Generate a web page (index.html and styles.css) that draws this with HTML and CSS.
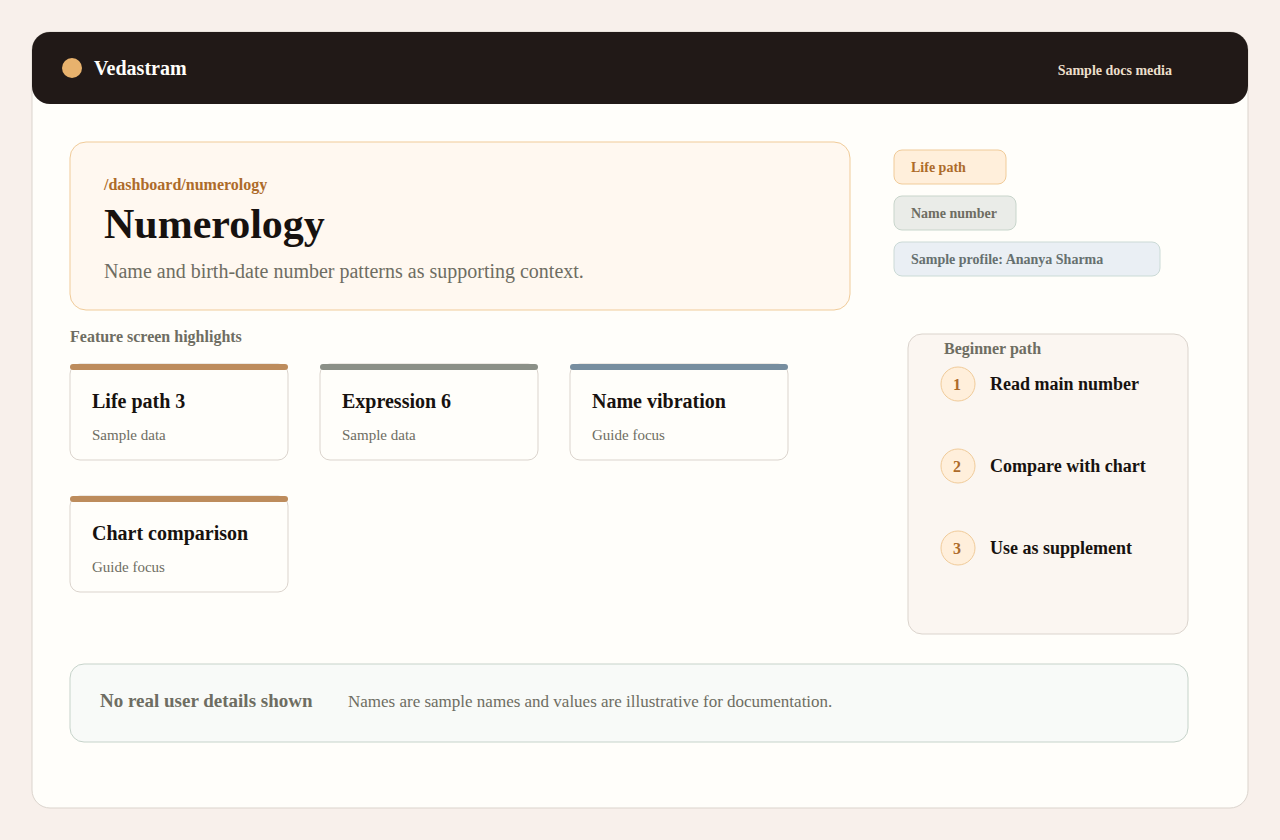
FILE: index.html
```html
<!DOCTYPE html>
<html lang="en">
<head>
  <meta charset="UTF-8">
  <meta name="viewport" content="width=device-width, initial-scale=1">
  <title>Vedastram - Numerology</title>
  <link rel="stylesheet" href="styles.css">
</head>
<body>

  <div class="shell outlined">
    <header class="topbar">
      <span class="logo-dot"></span>
      <span class="brand">Vedastram</span>
      <span class="topbar-note">Sample docs media</span>
    </header>

    <main>
      <div class="intro">
        <section class="hero outlined">
          <div class="route">/dashboard/numerology</div>
          <h1>Numerology</h1>
          <p>Name and birth-date number patterns as supporting context.</p>
        </section>
        <div class="pills">
          <span class="pill pill-gold outlined">Life path</span>
          <span class="pill pill-sage outlined">Name number</span>
          <span class="pill pill-blue outlined">Sample profile: Ananya Sharma</span>
        </div>
      </div>

      <div class="content">
        <section class="highlights">
          <h2>Feature screen highlights</h2>
          <div class="cards">
            <div class="card gold outlined">
              <h3>Life path 3</h3>
              <p>Sample data</p>
            </div>
            <div class="card sage outlined">
              <h3>Expression 6</h3>
              <p>Sample data</p>
            </div>
            <div class="card blue outlined">
              <h3>Name vibration</h3>
              <p>Guide focus</p>
            </div>
            <div class="card gold outlined">
              <h3>Chart comparison</h3>
              <p>Guide focus</p>
            </div>
          </div>
        </section>

        <aside class="path outlined">
          <h2>Beginner path</h2>
          <ol>
            <li><span class="step outlined">1</span>Read main number</li>
            <li><span class="step outlined">2</span>Compare with chart</li>
            <li><span class="step outlined">3</span>Use as supplement</li>
          </ol>
        </aside>
      </div>

      <div class="notice outlined">
        <strong>No real user details shown</strong>
        <span>Names are sample names and values are illustrative for documentation.</span>
      </div>
    </main>
  </div>

</body>
</html>
```

FILE: styles.css
```css
* {
  box-sizing: border-box;
}

body {
  margin: 0;
  padding: 31px;
  height: 840px;
  background: #f8f0eb;
  color: #17120f;
  font-family: "Liberation Serif", "Times New Roman", serif;
}

h1, h2, h3, p, ol {
  margin: 0;
  padding: 0;
}

/* soft hairline: 1px border drawn across two pixel rows */
.outlined {
  position: relative;
  isolation: isolate;
  --line: #dbd4cd;
  --fill: #fffefa;
  --radius: 10px;
}

.outlined::after {
  content: "";
  position: absolute;
  z-index: -1;
  inset: 0 1px 1px 0;
  background: var(--fill);
  border: 1px solid var(--line);
  border-radius: var(--radius);
  transform: translate(0.5px, 0.5px);
}

.shell {
  --radius: 18.5px;
  height: 778px;
  padding: 1px;
}

/* top bar */
.topbar {
  display: flex;
  align-items: center;
  height: 72px;
  padding: 0 76px 0 30px;
  background: #211917;
  border-radius: 18px;
  color: #fffefa;
}

.logo-dot {
  width: 20px;
  height: 20px;
  margin-right: 12px;
  border-radius: 50%;
  background: #e8b26d;
}

.brand {
  font-size: 20px;
  font-weight: bold;
  line-height: 24px;
}

.topbar-note {
  margin-left: auto;
  padding-top: 5px;
  font-size: 14px;
  font-weight: bold;
  line-height: 16px;
  color: #ecdfcb;
}

main {
  padding: 37px 59px 0 37px;
}

.intro {
  display: flex;
  gap: 42px;
}

.hero {
  --fill: #fff8f0;
  --line: #f0cb99;
  --radius: 16.5px;
  width: 782px;
  height: 170px;
  padding: 34px 35px 0;
}

.route {
  font-size: 16px;
  font-weight: bold;
  line-height: 20px;
  color: #ad6b2a;
}

.hero h1 {
  margin-top: 4px;
  font-size: 42px;
  line-height: 50px;
}

.hero p {
  margin-top: 10px;
  font-size: 20px;
  line-height: 24px;
  color: #6e6d62;
}

.pills {
  display: flex;
  flex-direction: column;
  gap: 10px;
  padding-top: 8px;
}

.pill {
  --radius: 8.5px;
  height: 36px;
  padding: 2px 0 0 18px;
  font-size: 14px;
  font-weight: bold;
  line-height: 33px;
}

.pill-gold {
  --fill: #ffefdb;
  --line: #f0cb99;
  width: 114px;
  color: #ad6b2a;
}

.pill-sage {
  --fill: #eaece8;
  --line: #c8d5cb;
  width: 124px;
  color: #6e6d62;
}

.pill-blue {
  --fill: #eaeff4;
  --line: #cbdad6;
  width: 268px;
  color: #66706f;
}

.content {
  display: flex;
  justify-content: space-between;
}

.highlights {
  width: 782px;
  padding-top: 16px;
}

h2 {
  font-size: 16px;
  line-height: 20px;
  color: #6e6d62;
}

.highlights h2 {
  padding-left: 1px;
}

.cards {
  display: grid;
  grid-template-columns: repeat(3, 220px);
  gap: 34px 30px;
  margin-top: 16px;
}

.card {
  --radius: 10.5px;
  height: 98px;
  padding: 26px 23px 0;
}

.card::before {
  content: "";
  position: absolute;
  top: 1px;
  left: 1px;
  right: 1px;
  height: 6px;
  border-radius: 3px;
}

.gold::before {
  background: #bd8c5c;
}

.sage::before {
  background: #8b9087;
}

.blue::before {
  background: #778e9f;
}

.card h3 {
  font-size: 20px;
  line-height: 24px;
}

.card p {
  margin-top: 13px;
  font-size: 15px;
  line-height: 18px;
  color: #6e6d62;
}

/* beginner steps */
.path {
  --fill: #fbf6f1;
  --radius: 14.5px;
  width: 282px;
  height: 302px;
  margin-top: 22px;
  padding: 6px 0 0 33px;
}

.path h2 {
  padding-left: 4px;
}

.path ol {
  display: flex;
  flex-direction: column;
  gap: 46px;
  margin-top: 7px;
  list-style: none;
}

.path li {
  display: flex;
  align-items: center;
  gap: 14px;
  height: 36px;
  font-size: 18px;
  font-weight: bold;
}

.step {
  --fill: #ffefdb;
  --line: #f0cb99;
  --radius: 50%;
  width: 36px;
  height: 36px;
  padding-right: 2px;
  color: #ad6b2a;
  font-size: 16px;
  line-height: 38px;
  text-align: center;
}

.notice {
  --fill: #f8faf8;
  --line: #c6d3ca;
  --radius: 14.5px;
  display: flex;
  align-items: baseline;
  gap: 35px;
  height: 80px;
  margin-top: 28px;
  padding: 27px 31px 0;
  color: #6e6d62;
  font-size: 17px;
}

.notice strong {
  width: 213px;
  font-size: 19px;
  line-height: 21px;
  white-space: nowrap;
}
```
